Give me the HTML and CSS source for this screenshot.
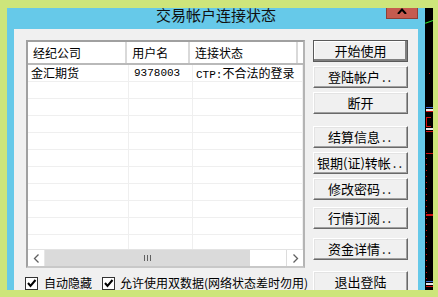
FILE: index.html
```html
<!DOCTYPE html>
<html lang="zh-CN">
<head>
<meta charset="utf-8">
<title>交易帐户连接状态</title>
<link rel="stylesheet" href="styles.css">
</head>
<body>
<div class="screen">
  <div class="window">
    <div class="titlebar">
      <span class="title">交易帐户连接状态</span>
      <div class="close">
        <svg width="12" height="6" viewBox="0 0 12 6"><path d="M2 6 L6 1.5 L10 6" fill="none" stroke="#000" stroke-width="2"/></svg>
      </div>
    </div>
    <div class="client">
      <div class="left">
        <div class="listview">
          <div class="lv-header">
            <div class="hcell c1">经纪公司</div>
            <div class="hcell c2">用户名</div>
            <div class="hcell c3">连接状态</div>
            <div class="hcell rest"></div>
          </div>
          <div class="lv-body">
            <div class="col c1"><div class="cell">金汇期货</div></div>
            <div class="col c2"><div class="cell mono">9378003</div></div>
            <div class="col c3"><div class="cell"><span class="mono">CTP:</span>不合法的登录</div></div>
            <div class="col rest"></div>
          </div>
          <div class="hscroll">
            <div class="sbtn">
              <svg width="7" height="9" viewBox="0 0 7 9"><path d="M5.5 0.5 L1.5 4.5 L5.5 8.5" fill="none" stroke="#606060" stroke-width="1.3"/></svg>
            </div>
            <div class="thumb"><span class="grip"></span><span class="grip"></span><span class="grip"></span></div>
            <div class="track"></div>
            <div class="sbtn right">
              <svg width="7" height="9" viewBox="0 0 7 9"><path d="M1.5 0.5 L5.5 4.5 L1.5 8.5" fill="none" stroke="#606060" stroke-width="1.3"/></svg>
            </div>
          </div>
        </div>
        <div class="checks">
          <label class="chk"><span class="box"><svg width="11" height="11" viewBox="0 0 11 11"><path d="M2 5 L4.5 8 L9.5 2" fill="none" stroke="#000" stroke-width="2"/></svg></span>自动隐藏</label>
          <label class="chk second"><span class="box"><svg width="11" height="11" viewBox="0 0 11 11"><path d="M2 5 L4.5 8 L9.5 2" fill="none" stroke="#000" stroke-width="2"/></svg></span>允许使用双数据(网络状态差时勿用)</label>
        </div>
      </div>
      <div class="buttons">
        <div class="btn default">开始使用</div>
        <div class="btn">登陆帐户<span class="dots">..</span></div>
        <div class="btn">断开</div>
        <div class="btn sep">结算信息<span class="dots">..</span></div>
        <div class="btn">银期(证)转帐<span class="dots">..</span></div>
        <div class="btn">修改密码<span class="dots">..</span></div>
        <div class="btn mid">行情订阅<span class="dots">..</span></div>
        <div class="btn sep2">资金详情<span class="dots">..</span></div>
        <div class="btn sep3">退出登陆</div>
      </div>
    </div>
  </div>
  <div class="chart">
    <span class="g-line"></span>
    <span class="dot" style="top:65px"></span>
    <span class="hl blue" style="top:99px"></span>
    <span class="hl white" style="top:101px"></span>
    <span class="hl red" style="top:103px"></span>
    <span class="bracket" style="top:109px"></span>
    <span class="hl white" style="top:120px"></span>
    <span class="hl red" style="top:123px"></span>
    <span class="hl red" style="top:145px"></span>
    <span class="vdots"></span>
    <span class="hl red thick" style="top:206px"></span>
    <span class="hl blue" style="top:273px"></span>
    <span class="hl white" style="top:275px"></span>
    <span class="hl red" style="top:278px"></span>
  </div>
</div>
</body>
</html>
```
FILE: styles.css
```css
html, body {
  margin: 0;
  padding: 0;
}
body {
  width: 438px;
  height: 297px;
  overflow: hidden;
  background: #cde57b;
  font-family: "Noto Sans CJK SC", "Noto Sans", sans-serif;
  color: #000;
}
.screen {
  display: flex;
  padding: 8px 0 0 7px;
  box-sizing: border-box;
  height: 297px;
}
.window {
  width: 418px;
  height: 282px;
  background: #66c9e9;
  padding: 0 7px;
  box-sizing: border-box;
  display: flex;
  flex-direction: column;
}
.titlebar {
  height: 21px;
  position: relative;
  display: flex;
  justify-content: center;
  align-items: flex-start;
}
.title {
  font-size: 15px;
  line-height: 13px;
  color: #111;
  margin-top: 0;
}
.close {
  position: absolute;
  top: 0;
  right: 0;
  width: 32px;
  height: 11px;
  box-sizing: border-box;
  background: #c55b4f;
  border: 1px solid #8d4037;
  border-top: none;
  display: flex;
  justify-content: center;
  align-items: flex-start;
}
.client {
  flex: 1;
  background: #f0f0f0;
  display: grid;
  grid-template-columns: 279px 95px;
  column-gap: 8px;
  padding: 11px 0 0 12px;
  align-items: start;
  overflow: hidden;
}
.left {
  display: flex;
  flex-direction: column;
}
.listview {
  height: 228px;
  box-sizing: border-box;
  border: 2px solid #a0a0a0;
  border-right-color: #b4b4b4;
  border-bottom-color: #c8c8c8;
  background: #fff;
  display: flex;
  flex-direction: column;
}
.lv-header {
  display: flex;
  height: 21px;
  border-bottom: 2px solid #b9b9b9;
  flex: none;
}
.hcell {
  font-size: 12px;
  line-height: 21px;
  padding-left: 5px;
  box-sizing: border-box;
  border-right: 2px solid #d9d9d9;
}
.c1 { width: 101px; }
.c2 { width: 64px; }
.c3 { width: 110px; }
.rest { flex: 1; border-right: none; }
.lv-body {
  flex: 1;
  display: flex;
  background-image: repeating-linear-gradient(to bottom, transparent 0, transparent 16px, #efefef 16px, #efefef 17px);
}
.col {
  height: 100%;
  box-sizing: border-box;
  border-right: 1px solid #efefef;
}
.col.rest { border-right: none; }
.cell {
  font-size: 12px;
  line-height: 16px;
  padding-left: 3px;
  white-space: nowrap;
}
.c2 .cell { padding-left: 5px; }
.mono {
  font-family: "Liberation Mono", "DejaVu Sans Mono", monospace;
  font-size: 11px;
}
.hscroll {
  height: 16px;
  flex: none;
  display: flex;
  border-top: 1px solid #e3e3e3;
  background: #fff;
}
.sbtn {
  width: 17px;
  display: flex;
  align-items: center;
  justify-content: center;
  background: #fff;
  border-right: 1px solid #e6e6e6;
  box-sizing: border-box;
}
.sbtn.right {
  border-right: none;
  border-left: 1px solid #dcdcdc;
}
.thumb {
  width: 205px;
  background: #dadada;
  display: flex;
  justify-content: center;
  align-items: center;
  gap: 2px;
}
.grip {
  width: 1px;
  height: 6px;
  background: #606060;
}
.track {
  flex: 1;
  background: #fff;
}
.checks {
  display: flex;
  align-items: center;
  margin-top: 8px;
  margin-left: -1px;
  font-size: 12px;
  line-height: 14px;
}
.chk {
  display: flex;
  align-items: center;
  gap: 6px;
  white-space: nowrap;
}
.chk.second {
  margin-left: 10px;
  gap: 5px;
}
.box {
  width: 13px;
  height: 13px;
  box-sizing: border-box;
  border: 1px solid #333;
  background: #fff;
  display: flex;
  align-items: center;
  justify-content: center;
}
.buttons {
  display: flex;
  flex-direction: column;
  gap: 4px;
}
.btn {
  height: 22px;
  box-sizing: border-box;
  background: #f0f0f0;
  border: 1px solid;
  border-color: #fff #696969 #696969 #fff;
  box-shadow: inset -1px -1px 0 #a0a0a0, inset 1px 1px 0 #e3e3e3;
  font-size: 13px;
  line-height: 19px;
  text-align: center;
  white-space: nowrap;
}
.btn.default {
  border: 1px solid #5a5a5a;
  box-shadow: inset -2px -2px 0 #808080, inset 1px 1px 0 #fff;
}
.dots {
  letter-spacing: 2px;
  margin-left: 2px;
}
.btn.sep { margin-top: 8px; }
.btn.mid { margin-top: 3px; }
.btn.sep2 { margin-top: 5px; }
.btn.sep3 { margin-top: 7px; }
.chart {
  width: 8px;
  height: 282px;
  background: #000;
  position: relative;
  overflow: hidden;
}
.g-line {
  position: absolute;
  left: 0;
  top: 13px;
  width: 10px;
  height: 1px;
  background: #2ee62e;
  transform: rotate(-20deg);
}
.dot {
  position: absolute;
  left: 4px;
  width: 1px;
  height: 1px;
  background: #d01010;
}
.hl {
  position: absolute;
  left: 1px;
  width: 7px;
  height: 1px;
}
.hl.blue { background: #3a6ad0; }
.hl.white { background: #e8e8e8; height: 2px; }
.hl.red { background: #d01010; }
.hl.thick { height: 2px; }
.bracket {
  position: absolute;
  left: 1px;
  width: 4px;
  height: 8px;
  border: 1px solid #d01010;
  border-right: none;
}
.vdots {
  position: absolute;
  left: 1px;
  top: 150px;
  width: 1px;
  height: 128px;
  background-image: repeating-linear-gradient(to bottom, #d01010 0, #d01010 1px, transparent 1px, transparent 6px);
}
```
